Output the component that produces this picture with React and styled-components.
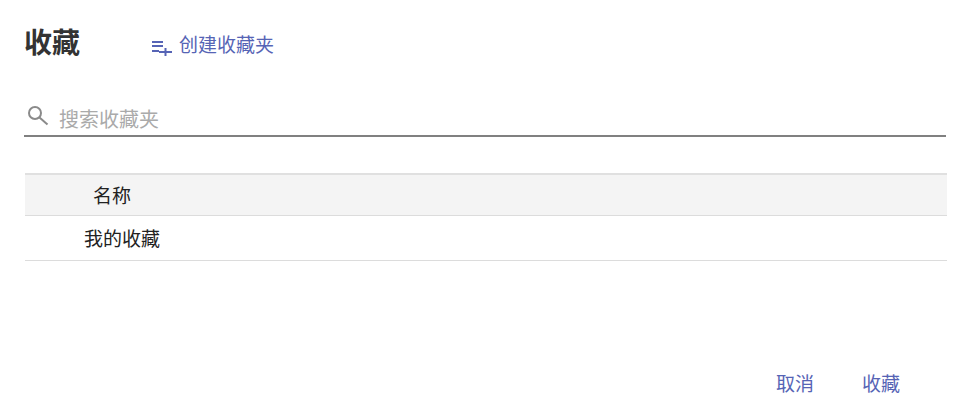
import styled, { createGlobalStyle } from 'styled-components';

const Global = createGlobalStyle`
  html, body { margin: 0; padding: 0; background: #fff; }
  body { font-family: "Liberation Sans", "Noto Sans CJK SC", sans-serif; }
`;

const Page = styled.div`
  width: 974px;
  height: 409px;
  box-sizing: border-box;
  padding: 26px 26px 0 24px;
  display: flex;
  flex-direction: column;
  overflow: hidden;
`;

const Head = styled.div`
  display: flex;
  align-items: center;
  height: 34px;
`;

const Title = styled.h1`
  margin: 2px 0 0;
  width: 127px;
  font-size: 28px;
  line-height: 34px;
  font-weight: 700;
  color: #333;
`;

const LinkButton = styled.button`
  display: flex;
  align-items: center;
  gap: 6px;
  padding: 0;
  border: none;
  background: none;
  font-family: inherit;
  font-size: 19px;
  line-height: 24px;
  color: #5664b5;
`;

const CreateButton = styled(LinkButton)`
  margin-top: 6px;
`;

const SearchBar = styled.div`
  margin-top: 30px;
  margin-right: 2px;
  height: 47px;
  box-sizing: border-box;
  display: flex;
  align-items: center;
  gap: 9px;
  padding: 11px 0 0 2px;
  border-bottom: 2px solid #808080;
`;

const SearchText = styled.span`
  font-size: 20px;
  color: #aaa;
`;

const Table = styled.div`
  margin: 36px 1px 0 1px;
`;

const Row = styled.div`
  height: ${p => p.$h}px;
  box-sizing: border-box;
  display: flex;
  align-items: center;
  padding-left: ${p => p.$indent}px;
  padding-bottom: 2px;
  font-size: 19px;
  color: #222;
  background: ${p => (p.$header ? '#f4f4f4' : '#fff')};
  border-bottom: 1px solid #dcdcdc;
  border-top: ${p => (p.$header ? '2px solid #e0e0e0' : 'none')};
`;

const Footer = styled.div`
  margin-top: 112px;
  display: flex;
  justify-content: flex-end;
  gap: 48px;
  padding-right: 48px;
`;

function AddListIcon() {
  return (
    <svg width="22" height="20" viewBox="0 0 22 20" fill="none" stroke="#5664b5" strokeWidth="2">
      <path d="M1 6h11M1 10h11M1 15h7M8 16h13M14.500 12v8" />
    </svg>
  );
}

function SearchIcon() {
  return (
    <svg width="24" height="24" viewBox="0 0 24 24" fill="none" stroke="#8a8a8a" strokeWidth="2">
      <circle cx="9" cy="7" r="6" />
      <path d="M13.500 11.500l8 7" />
    </svg>
  );
}

export default function App() {
  return (
    <Page>
      <Global />
      <Head>
        <Title>收藏</Title>
        <CreateButton><AddListIcon />创建收藏夹</CreateButton>
      </Head>
      <SearchBar>
        <SearchIcon />
        <SearchText>搜索收藏夹</SearchText>
      </SearchBar>
      <Table>
        <Row $header $h={43} $indent={68}>名称</Row>
        <Row $h={45} $indent={59}>我的收藏</Row>
      </Table>
      <Footer>
        <LinkButton>取消</LinkButton>
        <LinkButton>收藏</LinkButton>
      </Footer>
    </Page>
  );
}
